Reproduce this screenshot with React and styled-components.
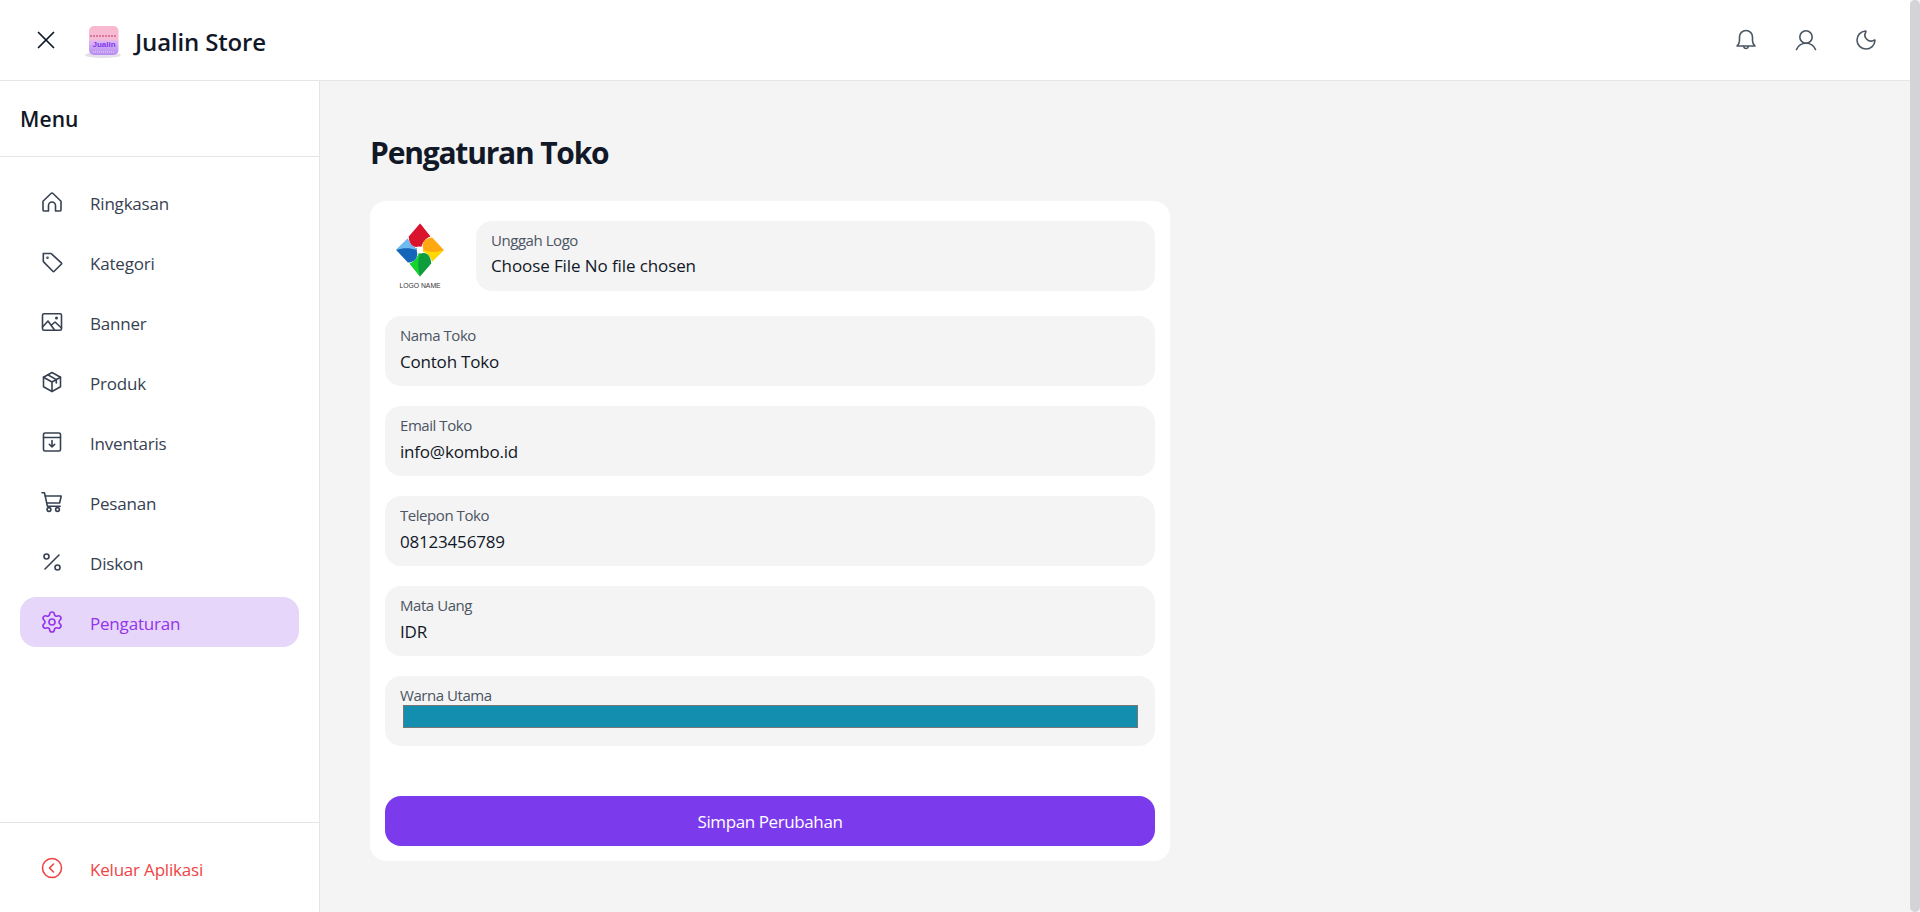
import React from "react";
import styled, { createGlobalStyle } from "styled-components";
import { X, Moon, Percent, Settings } from "lucide-react";

const Global = createGlobalStyle`
  html, body { margin: 0; height: 100%; overflow: hidden; }
  body { font-family: "Open Sans", "Noto Sans", "Liberation Sans", sans-serif; background: #f4f4f4; }
  * { box-sizing: border-box; }
`;

const Page = styled.div`
  display: flex;
  height: 912px;
  width: 1920px;
`;
const Viewport = styled.div`
  flex: 1;
  display: flex;
  flex-direction: column;
  min-width: 0;
`;
const ScrollRail = styled.div`
  width: 10px;
  background: #f4f4f4;
`;
const ScrollThumb = styled.div`
  height: 100%;
  background: #d4d4d8;
  border-radius: 6px;
`;
const Header = styled.header`
  height: 81px;
  flex: none;
  display: flex;
  align-items: center;
  background: #fff;
  border-bottom: 1px solid #e5e5e5;
  padding: 0 32px 0 31px;
`;
const Brand = styled.div`
  display: flex;
  align-items: center;
  margin-left: 24px;
  gap: 10px;
`;
const BrandName = styled.div`
  font-size: 24px;
  font-weight: 600;
  color: #111827;
  letter-spacing: -0.15px;
  padding-top: 2px;
`;
const HeaderActions = styled.div`
  margin-left: auto;
  display: flex;
  gap: 36px;
  color: #4b5563;
`;
const Body = styled.div`
  flex: 1;
  display: flex;
  min-height: 0;
`;
const Sidebar = styled.aside`
  width: 320px;
  flex: none;
  background: #fff;
  border-right: 1px solid #e5e5e5;
  display: flex;
  flex-direction: column;
`;
const SideTitle = styled.div`
  height: 76px;
  flex: none;
  display: flex;
  align-items: center;
  padding: 0 20px 0;
  font-size: 21px;
  font-weight: 600;
  letter-spacing: 0.1px;
  color: #111827;
  border-bottom: 1px solid #e5e5e5;
`;
const Nav = styled.nav`
  flex: 1;
  padding: 20px 20px 0;
  display: flex;
  flex-direction: column;
  gap: 10px;
`;
const NavItem = styled.div`
  height: 50px;
  display: flex;
  align-items: center;
  gap: 26px;
  padding-left: 20px;
  border-radius: 16px;
  color: ${(p) => (p.$danger ? "#ef4444" : p.$active ? "#9333ea" : "#374151")};
  background: ${(p) => (p.$active ? "#e6d6fa" : "transparent")};
  svg { flex: none; }
`;
const NavLabel = styled.span`
  font-size: 17px;
  letter-spacing: -0.2px;
  padding-top: 2px;
`;
const SideFooter = styled.div`
  height: 90px;
  flex: none;
  border-top: 1px solid #e5e5e5;
  padding: 20px 20px 0;
`;
const Main = styled.main`
  flex: 1;
  padding: 51px 50px 0;
  min-width: 0;
`;
const Title = styled.h1`
  margin: 0 0 27px;
  height: 42px;
  line-height: 42px;
  font-size: 30px;
  font-weight: 700;
  color: #111827;
  letter-spacing: -1.2px;
`;
const Card = styled.form`
  width: 800px;
  height: 660px;
  background: #fff;
  border-radius: 16px;
  padding: 20px 15px 15px;
  display: flex;
  flex-direction: column;
`;
const LogoRow = styled.div`
  display: flex;
  gap: 16px;
  margin-bottom: 25px;
`;
const LogoBox = styled.div`
  width: 75px;
  height: 70px;
  flex: none;
`;
const Field = styled.label`
  display: block;
  height: 70px;
  flex: ${(p) => (p.$grow ? 1 : "none")};
  background: #f4f4f4;
  border-radius: 16px;
  padding: 9px 15px 0;
  margin-bottom: ${(p) => p.$mb || 0}px;
`;
const FieldLabel = styled.span`
  display: block;
  height: 20px;
  line-height: 20px;
  font-size: 15px;
  color: #4b5563;
  letter-spacing: -0.45px;
`;
const TextInput = styled.input`
  display: block;
  width: 100%;
  border: 0;
  outline: 0;
  padding: 0;
  margin-top: 3px;
  height: 26px;
  background: transparent;
  font: inherit;
  font-size: 17px;
  letter-spacing: -0.2px;
  color: #111827;
`;
const FileValue = styled.span`
  display: block;
  margin-top: 3px;
  height: 26px;
  line-height: 26px;
  font-size: 17px;
  letter-spacing: -0.1px;
  color: #111827;
`;
const ColorInput = styled.input`
  display: block;
  width: 100%;
  height: 27px;
  margin: -2px 0 0;
  padding: 2px 2px 2px 1px;
  border: 0;
  background: transparent;
  &::-webkit-color-swatch-wrapper { padding: 0 0 0 2px; }
  &::-webkit-color-swatch { border: 1px solid #777; }
`;
const Submit = styled.button`
  height: 50px;
  margin-top: 50px;
  padding-top: 2px;
  flex: none;
  border: 0;
  border-radius: 16px;
  background: #7c3aed;
  color: #fff;
  font: inherit;
  font-size: 17px;
  letter-spacing: -0.4px;
`;

const Ic = ({ children, size = 24, sw = 1.6 }) => (
  <svg width={size} height={size} viewBox="0 0 24 24" fill="none" stroke="currentColor" strokeWidth={sw} strokeLinecap="round" strokeLinejoin="round">
    {children}
  </svg>
);
const HomeIc = () => (
  <Ic>
    <path d="M3 11.300 11 3.500a1.400 1.400 0 0 1 2 0l8 7.800V20a1 1 0 0 1-1 1h-4.500v-5.500a3.500 3.500 0 0 0-7 0V21H4a1 1 0 0 1-1-1z" />
  </Ic>
);
const TagIc = () => (
  <Ic>
    <path d="M3.300 3.500h7.500a1 1 0 0 1 .7.300l9.800 9a1 1 0 0 1 0 1.400L14.200 21.300a1 1 0 0 1-1.400 0L3.600 11.900a1 1 0 0 1-.3-.7z" />
    <circle cx="7.500" cy="7.800" r="0.500" />
  </Ic>
);
const ImageIc = () => (
  <Ic>
    <rect x="2.500" y="3.800" width="19" height="16.400" rx="1.500" />
    <path d="M2.500 17 8 11l6.500 9M11.500 15l3.500-3 6.500 6" />
    <circle cx="16.500" cy="8" r="0.700" />
  </Ic>
);
const BoxIc = () => (
  <Ic>
    <path d="M12 2.500l8.500 4.700v9.600L12 21.500l-8.500-4.700V7.200z" />
    <path d="M3.500 7.200 12 12l8.500-4.800M12 12v9.500M7.800 4.800l8.500 4.800v3.400" />
  </Ic>
);
const ArchiveIc = () => (
  <Ic>
    <rect x="3.500" y="3" width="17" height="18" rx="1.500" />
    <path d="M3.500 7.500h17M12 10.500v6.500M9.300 14.300 12 17l2.700-2.700" />
  </Ic>
);
const CartIc = () => (
  <Ic>
    <path d="M2 2.800h2.500l2.900 13.400h12.800" />
    <path d="M5.200 6h16l-1.600 7H6.700" />
    <circle cx="9" cy="19.500" r="1.900" />
    <circle cx="17.500" cy="19.500" r="1.900" />
  </Ic>
);
const BellIc = () => (
  <Ic>
    <path d="M3 18c1.800-1.500 2.500-3 2.500-5.500V9a6.500 6.500 0 0 1 13 0v3.500c0 2.500.7 4 2.500 5.500z" />
    <path d="M9.800 18.500c.3 2.600 4.100 2.600 4.400 0" />
  </Ic>
);
const UserIc = () => (
  <Ic>
    <circle cx="12" cy="9" r="6.200" />
    <path d="M2.500 21.500c1.500-3.600 4.900-6.300 9.500-6.300s8 2.700 9.500 6.300" />
  </Ic>
);
const LogoutIc = () => (
  <Ic>
    <circle cx="12" cy="12" r="9.500" />
    <path d="M13.500 8 9.500 12l4 4" />
  </Ic>
);

const StoreMark = () => (
  <svg width="40" height="40" viewBox="0 0 40 40">
    <defs>
      <linearGradient id="storeGrad" x1="0" y1="0" x2="0" y2="1">
        <stop offset="0" stopColor="#f9b8ce" />
        <stop offset="0.45" stopColor="#f5bcd6" />
        <stop offset="0.55" stopColor="#dcb4f4" />
        <stop offset="1" stopColor="#b68bf3" />
      </linearGradient>
    </defs>
    <ellipse cx="18" cy="35" rx="18" ry="3" fill="#e4dfea" />
    <rect x="4" y="6" width="29.500" height="29" rx="5" fill="url(#storeGrad)" />
    <path d="M5 16h27" stroke="#d9668c" strokeWidth="2" strokeDasharray="2 1" opacity="0.8" />
    <text x="19" y="26.500" textAnchor="middle" fontSize="8" fontFamily="Liberation Sans" fontWeight="700" fill="#7c3aed">Jualin</text>
    <path d="M8 32h22" stroke="#d9c5f8" strokeWidth="1.500" strokeDasharray="1 1" />
  </svg>
);

const PETAL = "M34.500 2 L46 15 C41 16 37 21 36 25 H33 C27 27 22 22 22 15 Z";
const HALF = "M34.500 2 L46 15 C41 16 37 21 36 25 H34.500 C37 17 37 10 34.500 2 Z";
const ShopLogo = () => {
  const petals = [
    ["#d9142c", "#d9142c", 0],
    ["#ffa812", "#ffd800", 90],
    ["#0e9c3c", "#12d62a", 180],
    ["#1565b8", "#6fbcf0", 270],
  ];
  return (
    <svg width="75" height="70" viewBox="0 0 75 70">
      <g transform="translate(35 29) scale(0.9 1) translate(-34.500 -28.500)">
        {petals.map(([base, half, angle]) => (
          <g key={angle} transform={`rotate(${angle} 34.500 28.500)`}>
            <path d={PETAL} fill={base} />
            <path d={HALF} fill={half} />
          </g>
        ))}
      </g>
      <text x="35" y="67" textAnchor="middle" fontSize="6.800" fontFamily="Liberation Sans" fill="#333">LOGO NAME</text>
    </svg>
  );
};

const navItems = [
  ["Ringkasan", <HomeIc key="a" />],
  ["Kategori", <TagIc key="b" />],
  ["Banner", <ImageIc key="c" />],
  ["Produk", <BoxIc key="d" />],
  ["Inventaris", <ArchiveIc key="e" />],
  ["Pesanan", <CartIc key="f" />],
  ["Diskon", <Percent key="g" size={24} strokeWidth={1.6} />],
  ["Pengaturan", <Settings key="h" size={24} strokeWidth={1.6} />],
];

const fields = [
  ["Nama Toko", "Contoh Toko"],
  ["Email Toko", "info@kombo.id"],
  ["Telepon Toko", "08123456789"],
  ["Mata Uang", "IDR"],
];

export default function App() {
  return (
    <Page>
      <Global />
      <Viewport>
        <Header>
          <X size={30} strokeWidth={1.4} color="#111827" />
          <Brand>
            <StoreMark />
            <BrandName>Jualin Store</BrandName>
          </Brand>
          <HeaderActions>
            <BellIc />
            <UserIc />
            <Moon size={24} strokeWidth={1.6} />
          </HeaderActions>
        </Header>
        <Body>
          <Sidebar>
            <SideTitle>Menu</SideTitle>
            <Nav>
              {navItems.map(([label, icon]) => (
                <NavItem key={label} $active={label === "Pengaturan"}>
                  {icon}
                  <NavLabel>{label}</NavLabel>
                </NavItem>
              ))}
            </Nav>
            <SideFooter>
              <NavItem $danger>
                <LogoutIc />
                <NavLabel>Keluar Aplikasi</NavLabel>
              </NavItem>
            </SideFooter>
          </Sidebar>
          <Main>
            <Title>Pengaturan Toko</Title>
            <Card>
              <LogoRow>
                <LogoBox>
                  <ShopLogo />
                </LogoBox>
                <Field $grow>
                  <FieldLabel>Unggah Logo</FieldLabel>
                  <FileValue>Choose File No file chosen</FileValue>
                </Field>
              </LogoRow>
              {fields.map(([label, value]) => (
                <Field key={label} $mb={20}>
                  <FieldLabel>{label}</FieldLabel>
                  <TextInput defaultValue={value} />
                </Field>
              ))}
              <Field>
                <FieldLabel>Warna Utama</FieldLabel>
                <ColorInput type="color" defaultValue="#148eae" />
              </Field>
              <Submit type="button">Simpan Perubahan</Submit>
            </Card>
          </Main>
        </Body>
      </Viewport>
      <ScrollRail>
        <ScrollThumb />
      </ScrollRail>
    </Page>
  );
}
